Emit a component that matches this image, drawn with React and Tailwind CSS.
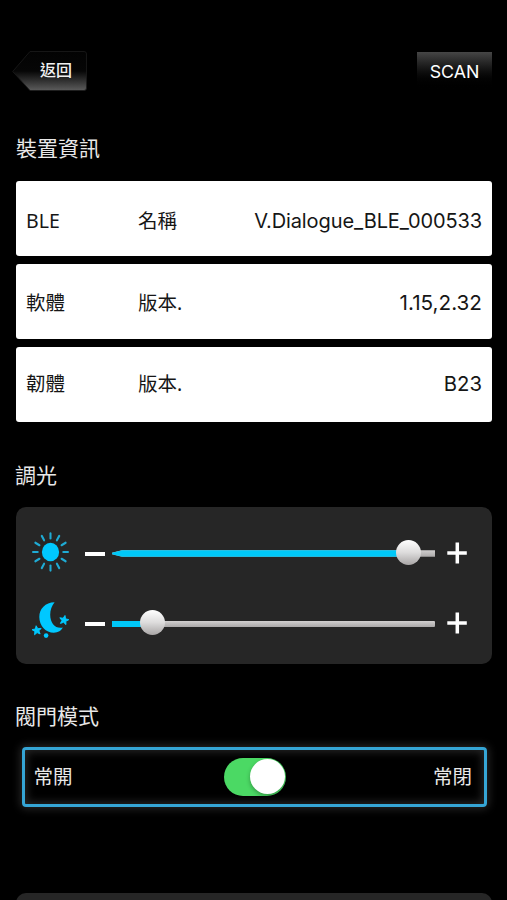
import { useState } from 'react'

const deviceInfo = [
  { name: 'BLE', label: '名稱', value: 'V.Dialogue_BLE_000533', pad: 'pt-[4px]', text: 'text-[20px] tracking-[-0.1px]' },
  { name: '軟體', label: '版本.', value: '1.15,2.32', pad: 'pt-px', text: 'text-[20.7px]' },
  { name: '韌體', label: '版本.', value: 'B23', pad: 'pb-[2px]', text: 'text-[20.3px]' },
]

const STAR = 'M0 -4.8L1.23 -1.7L4.57 -1.48L2 .65L2.82 3.88L0 2.1L-2.82 3.88L-2 .65L-4.57 -1.48L-1.23 -1.7Z'

function SunIcon() {
  const rays = [0, 30, 60, 90, 120, 150, 180, 210, 240, 270, 300, 330]

  return (
    <svg className="w-10 h-10" viewBox="-20.5 -20 40 40">
      <ellipse rx="8.6" ry="9.2" fill="#00c8ff" />
      <g transform="scale(.94 1)" stroke="#1fabd4" strokeWidth="2.2" strokeLinecap="round">
        {rays.map((angle) => (
          <path key={angle} d="M0 -13.6V-18.6" transform={`rotate(${angle})`} />
        ))}
      </g>
    </svg>
  )
}

function MoonIcon() {
  return (
    <svg className="w-10 h-10" viewBox="0 0 40 40" fill="#00c8ff">
      <path d="M24.6 .3C15.2 .3 9.3 7.2 9.3 15C9.3 24.2 16 30.7 23.8 30.7C28.2 30.7 31.4 28.6 32.8 25.6C25.8 27.2 20.2 21.6 20.2 12.8C20.2 8 21.8 3.6 24.6 .3Z" />
      <g stroke="#00c8ff" strokeWidth=".9" strokeLinejoin="round">
        <path d={STAR} transform="translate(34 18.2) rotate(12)" />
        <path d={STAR} transform="translate(6.8 28.5) rotate(-8)" />
      </g>
      <circle cx="16.1" cy="33.6" r="2.3" />
    </svg>
  )
}

function Slider({ value, onChange, pointed }) {
  return (
    <div className="relative w-[323px] h-[25px] flex items-center">
      <div
        className={`w-full h-[6.5px] bg-linear-to-b from-[#d2d0d0] to-[#aaa8a8] ${
          pointed ? '[clip-path:polygon(0_38%,10px_0,100%_0,100%_100%,10px_100%,0_62%)]' : 'rounded-[1px]'
        }`}
      >
        <div className="h-full bg-[#00c8f8]" style={{ width: `${value}%` }} />
      </div>
      {/* Thumb */}
      <div
        className="absolute -top-px w-[25px] h-[25px] -ml-[12.5px] rounded-full bg-linear-to-b from-white via-[#dddcdc] to-[#a9a6a6]"
        style={{ left: `${value}%` }}
      />
      <input
        type="range"
        value={value}
        onChange={(e) => onChange(Number(e.target.value))}
        className="absolute inset-0 w-full opacity-0"
      />
    </div>
  )
}

function DimmerRow({ icon, value, onChange, pointed }) {
  return (
    <div className="h-10 flex items-center">
      {icon}
      <button className="mt-[4px] ml-[15px] w-5 h-[4px] bg-white" onClick={() => onChange(Math.max(0, value - 1))} />
      <div className="mt-[3px] ml-[7px]">
        <Slider value={value} onChange={onChange} pointed={pointed} />
      </div>
      <button className="mt-[2px] ml-[12px]" onClick={() => onChange(Math.min(100, value + 1))}>
        <svg className="w-5 h-[22px]" viewBox="0 0 20 22" stroke="white" strokeWidth="3.5">
          <path d="M.3 11H19.8M10.3 .5V21.5" />
        </svg>
      </button>
    </div>
  )
}

export default function App() {
  const [day, setDay] = useState(91.8)
  const [night, setNight] = useState(12.6)
  const [closed, setClosed] = useState(true)

  return (
    <div className="w-[507px] h-[900px] overflow-hidden bg-black px-4 text-[#e8e8e8] font-['Noto_Sans','Noto_Sans_CJK_TC',sans-serif]">
      {/* Top bar */}
      <header className="mt-[51px] -ml-1 -mr-px h-10 flex justify-between">
        <button className="w-[75px] h-10 relative">
          <svg className="w-full h-full" viewBox="0 0 75 40">
            <defs>
              <linearGradient id="back" x1="0" y1="0" x2="0" y2="1">
                <stop offset="0" stopColor="#030303" />
                <stop offset=".5" stopColor="#060606" />
                <stop offset=".68" stopColor="#242424" />
                <stop offset="1" stopColor="#5c5c5c" />
              </linearGradient>
            </defs>
            <path d="M18 .5H72Q74.5 .5 74.5 3V37Q74.5 39.5 72 39.5H18L.7 20.5Z" fill="url(#back)" stroke="#1c1c1c" strokeWidth=".8" />
          </svg>
          <span className="absolute top-0 bottom-[2px] left-[28px] flex items-center text-[16px] font-medium text-[#f0f0f0] leading-none">返回</span>
        </button>
        <button className="mt-px w-[75px] h-[38px] pt-[2px] bg-linear-to-b from-[#464646] via-[#101010] via-50% to-black text-white text-[17.8px] font-['Inter',sans-serif]">
          SCAN
        </button>
      </header>

      <h2 className="mt-[42px] h-[30px] text-[21px] leading-[30px]">裝置資訊</h2>
      <div className="mt-[18.4px] w-[476px] flex flex-col gap-[8px]">
        {deviceInfo.map((row) => (
          <div key={row.name} className={`h-[75px] px-[10px] flex items-center rounded-[3px] bg-white text-[#161616] text-[19.5px] ${row.pad}`}>
            <span className="w-[112px] [&:lang(en)]:text-xl">{row.name}</span>
            <span>{row.label}</span>
            <span className={`ml-auto pt-px font-['Inter',sans-serif] ${row.text}`}>{row.value}</span>
          </div>
        ))}
      </div>

      <h2 className="mt-[37.6px] h-[30px] -ml-px text-[21px] leading-[30px]">調光</h2>
      <section className="mt-[17px] w-[476px] h-[157px] pt-[25px] pl-[14px] flex flex-col gap-[30.5px] rounded-[10px] bg-[#262626]">
        <DimmerRow icon={<SunIcon />} value={day} onChange={setDay} pointed />
        <DimmerRow icon={<MoonIcon />} value={night} onChange={setNight} />
      </section>

      <h2 className="mt-[37px] h-[30px] -ml-px text-[21px] leading-[30px]">閥門模式</h2>
      <section className="mt-[16px] ml-[5.5px] w-[465.5px] h-[60px] pl-[9px] pr-[12px] flex items-center justify-between rounded-[4px] border-3 border-[#35a5d5] text-[19.5px] shadow-[0_0_8px_2px_#262626,inset_0_0_9px_2px_#262626]">
        <span>常開</span>
        <button
          onClick={() => setClosed(!closed)}
          className={`ml-[5px] w-[62px] h-[38px] p-[1.5px] flex rounded-full ${closed ? 'bg-[#4bd964] justify-end' : 'bg-[#555] justify-start'}`}
        >
          <span className="w-[35px] h-[35px] rounded-full bg-white shadow-[0_2px_4px_rgba(0,0,0,0.3)]" />
        </button>
        <span>常閉</span>
      </section>

      <section className="mt-[86px] w-[476px] h-[60px] rounded-[10px] bg-[#262626]" />
    </div>
  )
}
